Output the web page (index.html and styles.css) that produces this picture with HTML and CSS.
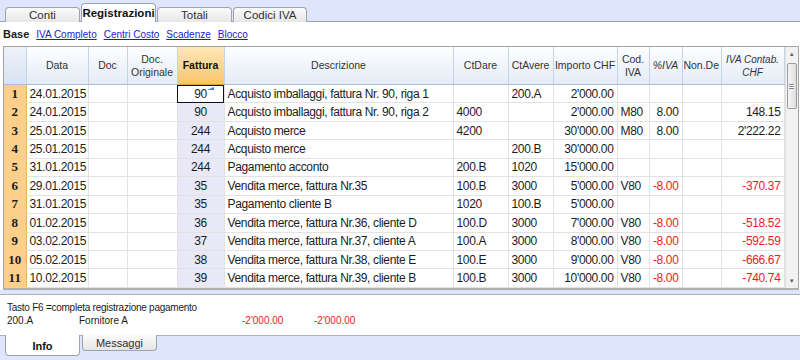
FILE: index.html
```html
<!DOCTYPE html>
<html lang="it">
<head>
    <meta charset="UTF-8">
    <title>Registrazioni</title>
    <link rel="stylesheet" href="styles.css">
</head>
<body>
    <div class="tabs">
        <div class="tab">Conti</div>
        <div class="tab attivo">Registrazioni</div>
        <div class="tab">Totali</div>
        <div class="tab">Codici IVA</div>
    </div>

    <div class="pannello">
        <div class="viste">
            <b>Base</b>
            <a href="#">IVA Completo</a>
            <a href="#">Centri Costo</a>
            <a href="#">Scadenze</a>
            <a href="#">Blocco</a>
        </div>

        <div class="griglia">
            <table>
                <colgroup>
                    <col style="width:22px">
                    <col style="width:62px">
                    <col style="width:39px">
                    <col style="width:50px">
                    <col style="width:47px">
                    <col style="width:229px">
                    <col style="width:55px">
                    <col style="width:45px">
                    <col style="width:64px">
                    <col style="width:32px">
                    <col style="width:33px">
                    <col style="width:39px">
                    <col style="width:63px">
                </colgroup>
                <thead>
                    <tr>
                        <th></th>
                        <th>Data</th>
                        <th>Doc</th>
                        <th>Doc.<br>Originale</th>
                        <th class="fattura">Fattura</th>
                        <th>Descrizione</th>
                        <th>CtDare</th>
                        <th>CtAvere</th>
                        <th>Importo CHF</th>
                        <th>Cod.<br>IVA</th>
                        <th><i>%IVA</i></th>
                        <th class="taglia">.Non.De</th>
                        <th class="stretto"><i>IVA Contab.<br>CHF</i></th>
                    </tr>
                </thead>
                <tbody>
                    <tr>
                        <td class="num">1</td><td>24.01.2015</td><td></td><td></td>
                        <td class="fat cursore">90<svg class="segno" width="8" height="5" viewBox="0 0 8 5"><path d="M0 4 L7 1 L7 4 Z" fill="#3b7fd8"/></svg></td>
                        <td>Acquisto imballaggi, fattura Nr. 90, riga 1</td><td></td><td>200.A</td>
                        <td class="dx">2'000.00</td><td></td><td></td><td></td><td></td>
                    </tr>
                    <tr>
                        <td class="num">2</td><td>24.01.2015</td><td></td><td></td><td class="fat">90</td>
                        <td>Acquisto imballaggi, fattura Nr. 90, riga 2</td><td>4000</td><td></td>
                        <td class="dx">2'000.00</td><td>M80</td><td class="dx">8.00</td><td></td><td class="dx">148.15</td>
                    </tr>
                    <tr>
                        <td class="num">3</td><td>25.01.2015</td><td></td><td></td><td class="fat">244</td>
                        <td>Acquisto merce</td><td>4200</td><td></td>
                        <td class="dx">30'000.00</td><td>M80</td><td class="dx">8.00</td><td></td><td class="dx">2'222.22</td>
                    </tr>
                    <tr>
                        <td class="num">4</td><td>25.01.2015</td><td></td><td></td><td class="fat">244</td>
                        <td>Acquisto merce</td><td></td><td>200.B</td>
                        <td class="dx">30'000.00</td><td></td><td></td><td></td><td></td>
                    </tr>
                    <tr>
                        <td class="num">5</td><td>31.01.2015</td><td></td><td></td><td class="fat">244</td>
                        <td>Pagamento acconto</td><td>200.B</td><td>1020</td>
                        <td class="dx">15'000.00</td><td></td><td></td><td></td><td></td>
                    </tr>
                    <tr>
                        <td class="num">6</td><td>29.01.2015</td><td></td><td></td><td class="fat">35</td>
                        <td>Vendita merce, fattura Nr.35</td><td>100.B</td><td>3000</td>
                        <td class="dx">5'000.00</td><td>V80</td><td class="dx neg">-8.00</td><td></td><td class="dx neg">-370.37</td>
                    </tr>
                    <tr>
                        <td class="num">7</td><td>31.01.2015</td><td></td><td></td><td class="fat">35</td>
                        <td>Pagamento cliente B</td><td>1020</td><td>100.B</td>
                        <td class="dx">5'000.00</td><td></td><td></td><td></td><td></td>
                    </tr>
                    <tr>
                        <td class="num">8</td><td>01.02.2015</td><td></td><td></td><td class="fat">36</td>
                        <td>Vendita merce, fattura Nr.36, cliente D</td><td>100.D</td><td>3000</td>
                        <td class="dx">7'000.00</td><td>V80</td><td class="dx neg">-8.00</td><td></td><td class="dx neg">-518.52</td>
                    </tr>
                    <tr>
                        <td class="num">9</td><td>03.02.2015</td><td></td><td></td><td class="fat">37</td>
                        <td>Vendita merce, fattura Nr.37, cliente A</td><td>100.A</td><td>3000</td>
                        <td class="dx">8'000.00</td><td>V80</td><td class="dx neg">-8.00</td><td></td><td class="dx neg">-592.59</td>
                    </tr>
                    <tr>
                        <td class="num">10</td><td>05.02.2015</td><td></td><td></td><td class="fat">38</td>
                        <td>Vendita merce, fattura Nr.38, cliente E</td><td>100.E</td><td>3000</td>
                        <td class="dx">9'000.00</td><td>V80</td><td class="dx neg">-8.00</td><td></td><td class="dx neg">-666.67</td>
                    </tr>
                    <tr>
                        <td class="num">11</td><td>10.02.2015</td><td></td><td></td><td class="fat">39</td>
                        <td>Vendita merce, fattura Nr.39, cliente B</td><td>100.B</td><td>3000</td>
                        <td class="dx">10'000.00</td><td>V80</td><td class="dx neg">-8.00</td><td></td><td class="dx neg">-740.74</td>
                    </tr>
                </tbody>
            </table>

            <div class="scrollbar">
                <div class="freccia">&#9650;</div>
                <div class="pista">
                    <div class="cursore-scroll"><span class="presa"></span></div>
                </div>
                <div class="freccia">&#9660;</div>
            </div>
        </div>
    </div>

    <div class="info">
        <div>Tasto F6 =completa registrazione pagamento</div>
        <div class="riga-info">
            <span class="conto">200.A</span>
            <span class="nome">Fornitore A</span>
            <span class="importo neg">-2'000.00</span>
            <span class="importo neg">-2'000.00</span>
        </div>
    </div>

    <div class="tabs-basso">
        <div class="tab attivo">Info</div>
        <div class="tab">Messaggi</div>
    </div>
</body>
</html>
```

FILE: styles.css
```css
/* Generale */
body {
    margin: 0;
    background: #dde6fc;
    font-family: "Liberation Sans", Arial, sans-serif;
    font-size: 12px;
    color: #1c1c1c;
}

/* Schede in alto */
.tabs {
    display: flex;
    align-items: flex-end;
    height: 21px;
    padding-left: 5px;
    gap: 1px;
    border-bottom: 1px solid #9ea3ab;
}

.tab {
    box-sizing: border-box;
    width: 75px;
    height: 15px;
    margin-bottom: -1px;
    display: flex;
    align-items: center;
    justify-content: center;
    border: 1px solid #9ea3ab;
    border-bottom: none;
    border-radius: 4px 4px 0 0;
    background: linear-gradient(#fbfbfb, #e6e6e6);
    color: #303030;
    font-size: 11.5px;
}

.tab.attivo {
    height: 19px;
    background: #fff;
    font-weight: bold;
    color: #111;
}

.tabs .tab:last-child {
    width: 74px;
}

/* Pannello bianco */
.pannello {
    background: #fff;
    height: 268px;
}

.viste {
    height: 24px;
    display: flex;
    align-items: center;
    padding-left: 3px;
    font-size: 10px;
}

.viste b {
    font-size: 11px;
    margin-right: 7px;
}

.viste a {
    color: #1a1ad6;
    margin-right: 7px;
}

/* Griglia */
.griglia {
    display: flex;
    margin-left: 3px;
    width: 794px;
    border: 1px solid #a3a3a3;
    border-bottom: 2px solid #b0b0b0;
}

table {
    table-layout: fixed;
    width: 780px;
    border-collapse: collapse;
}

th {
    height: 37px;
    padding: 0;
    font-weight: normal;
    font-size: 10.5px;
    line-height: 13px;
    color: #333;
    background: linear-gradient(#fdfeff, #e3ebf6);
    border-right: 1px solid #c3d3e8;
    border-bottom: 1px solid #a8bcd6;
    text-align: center;
    white-space: nowrap;
    overflow: hidden;
}

th:first-child {
    background: linear-gradient(#eef2fa, #d9e3f2);
}

th.fattura {
    background: linear-gradient(#fde7b8, #f8c46e);
    font-weight: bold;
    color: #111;
    border-bottom-color: #e0a040;
}

th.taglia {
    text-align: left;
    text-indent: -2px;
}

th.stretto {
    font-size: 10px;
}

td {
    height: 18.45px;
    padding: 0 3px;
    box-sizing: border-box;
    letter-spacing: -0.35px;
    border-right: 1px solid #e2e2e2;
    border-bottom: 1px solid #e2e2e2;
    white-space: nowrap;
    overflow: hidden;
}

td.num {
    background: #fcd08b;
    border-right: 1px solid #e9b25c;
    border-bottom: 1px solid #fcd08b;
    text-align: center;
    font-family: "Liberation Serif", serif;
    font-weight: bold;
    font-size: 13px;
    letter-spacing: 0;
    padding: 0;
}

td.fat {
    background: #e8e8f6;
    text-align: center;
    position: relative;
}

td.cursore {
    background: #fff;
    outline: 1px solid #111;
    outline-offset: -1px;
}

.segno {
    position: absolute;
    top: 1px;
    right: 9px;
}

.dx {
    text-align: right;
}

.neg {
    color: #ee1c1c;
}

/* Barra di scorrimento */
.scrollbar {
    width: 14px;
    display: flex;
    flex-direction: column;
    background: #f2f2f2;
    border-left: 1px solid #e0e0e0;
}

.freccia {
    height: 14px;
    font-size: 6px;
    color: #606060;
    display: flex;
    align-items: center;
    justify-content: center;
}

.pista {
    flex: 1;
    padding: 2px 1px;
}

.cursore-scroll {
    height: 44px;
    border: 1px solid #9a9a9a;
    border-radius: 2px;
    background: linear-gradient(90deg, #f4f4f4, #e0e0e0);
    display: flex;
    align-items: center;
    justify-content: center;
}

.presa {
    width: 5px;
    height: 5px;
    border-top: 1px solid #888;
    border-bottom: 1px solid #888;
    box-sizing: border-box;
    background: linear-gradient(#fff 40%, #888 40%, #888 60%, #fff 60%);
}

/* Pannello informazioni */
.info {
    margin-top: 4px;
    height: 42px;
    box-sizing: border-box;
    background: #fff;
    border-top: 1px solid #b0b0b0;
    border-bottom: 1px solid #b0b0b0;
    padding: 6px 7px 0;
    font-size: 10px;
    letter-spacing: -0.25px;
    line-height: 13px;
}

.riga-info {
    display: flex;
    letter-spacing: 0;
}

.conto {
    width: 72px;
}

.nome {
    width: 163px;
}

.importo {
    width: 72px;
}

/* Schede in basso */
.tabs-basso {
    display: flex;
    padding-left: 5px;
    gap: 2px;
    margin-top: -1px;
}

.tabs-basso .tab {
    margin: 0;
    height: 16px;
    border: 1px solid #9ea3ab;
    border-top: none;
    border-radius: 0 0 4px 4px;
    font-size: 11px;
}

.tabs-basso .tab.attivo {
    height: 21px;
    padding-top: 2px;
}
```
